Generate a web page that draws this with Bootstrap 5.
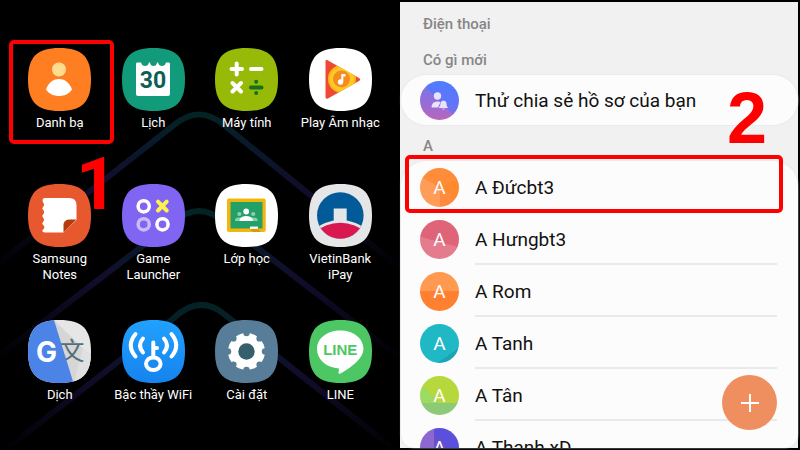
<!DOCTYPE html>
<html lang="vi">
<head>
<meta charset="utf-8">
<meta name="viewport" content="width=device-width, initial-scale=1">
<title>Danh bạ</title>
<link href="https://cdn.jsdelivr.net/npm/bootstrap@5.3.0/dist/css/bootstrap.min.css" rel="stylesheet">
<style>
body { font-family: Roboto, "Noto Sans", sans-serif; background: #000; }
.home { padding: 48px 13px 0; }
.wallpaper { z-index: 0; opacity: .8; }
.apps { z-index: 1; }
.app { min-height: 136px; font-size: 13px; line-height: 16px; color: #fff; gap: 4px; }
.app-icon { width: 63px; height: 63px; }
.mark-box { border: 4px solid #f00; border-radius: 5px; pointer-events: none; z-index: 3; }
.mark-box-app { top: -8px; left: -4px; right: -7px; height: 104px; }
.mark-box-row { top: -6px; left: 5px; right: 15px; height: 58px; }
.step { font: bold 72px/72px "Liberation Sans", Arial, sans-serif; color: #f00; z-index: 3; }
.step-one { top: 101px; left: 63px; font-family: Roboto, sans-serif; }
.step-two { top: 80px; right: 31px; }
.contacts { background: #f1f1f1; border: 2px solid #000; border-left: 0; padding-top: 11px; }
.heading { font-size: 15px; line-height: 22px; font-weight: 500; color: #868686; margin: 0 23px 4px; }
.heading-next { margin-top: 10px; }
.sheet { background: #fcfcfc; border-radius: 25px; margin-left: 1px; box-shadow: 0 0 2px #ddd; }
.sheet-list { border-radius: 25px 25px 14px 14px; min-height: 0; }
.person { color: #111; font-size: 19px; line-height: 24px; padding-left: 19px; gap: 16px; height: 52px; }
.person-single { height: 50px; }
.person-name { height: 100%; margin-right: 21px; padding-top: 4px; border-bottom: 2px solid #e8e9ea; }
.person-single .person-name { border: 0; padding-top: 2px; }
.avatar { width: 39px; height: 39px; color: #fff; padding-top: 2px; }
.av-profile { padding: 0; background: linear-gradient(45deg, #c967ae55 50%, #5277ff99 50%), linear-gradient(#4d83ff, #7a70f0 55%, #b066c0); }
.av-orange { background: conic-gradient(#ff8c38 0 65deg, #ff8a2e 65deg 120deg, #ff8c3c 120deg 180deg, #ff9c57 180deg 300deg, #ff8c38 300deg); }
.av-pink { background: linear-gradient(195deg, #e06478 55%, #e57c8d 55%); }
.av-sunset { background: linear-gradient(#ff9a50 50%, #ff8030 50%); }
.av-teal { background: linear-gradient(145deg, #20b8c4 77%, #1da3b8 77%); }
.av-lime { background: linear-gradient(#0000 68%, #8cca78 68%), linear-gradient(45deg, #9dda60 40%, #b6d83c 40%); }
.av-violet { background: linear-gradient(90deg, #8c68d0 37%, #0000 37%), linear-gradient(45deg, #6850c8 60%, #5b50dc 60%); }
.fab { width: 55px; height: 55px; right: 21px; bottom: 18px; background: #ef8f60; z-index: 2; }
</style>
<script src="https://cdn.jsdelivr.net/npm/bootstrap@5.3.0/dist/js/bootstrap.bundle.min.js"></script>
</head>
<body>
<svg class="d-none" aria-hidden="true">
  <symbol id="tile" viewBox="0 0 63 63"><path d="M31.500 0C54 0 63 9 63 31.500S54 63 31.500 63 0 54 0 31.500 9 0 31.500 0Z"/></symbol>
</svg>
<main class="row g-0 vh-100 overflow-hidden">
  <section class="col-6 home position-relative h-100 overflow-hidden">
    <svg class="wallpaper position-absolute top-0 start-0 w-100 h-100" viewBox="0 0 400 450" preserveAspectRatio="none" fill="none" stroke-width="6" aria-hidden="true">
      <defs>
        <linearGradient id="beam" x1="0" y1="0" x2="0" y2="1"><stop offset="0" stop-color="#062c2e"/><stop offset=".2" stop-color="#0c2036"/><stop offset=".5" stop-color="#170f36"/><stop offset="1" stop-color="#020103"/></linearGradient>
      </defs>
      <g stroke="url(#beam)">
        <path d="M0 262L174 125Q199 104 224 125L400 268"/>
        <path d="M0 355L174 222Q199 200 224 222L400 358"/>
        <path d="M5 450L174 318Q199 294 224 314L395 450"/>
      </g>
    </svg>
    <nav class="apps row row-cols-4 g-0 position-relative text-center">
      <a href="#" class="app col d-flex flex-column align-items-center text-decoration-none position-relative">
        <svg class="app-icon" viewBox="0 0 63 63"><use href="#tile" fill="#ff7e22"/><circle cx="31" cy="21.500" r="7" fill="#ffdd8e"/><path fill="#fff" d="M18 41.500C20.500 34 26 31 31 31S41.500 34 44 41.500C41 46 36 48 31 48S21 46 18 41.500Z"/></svg>
        <span>Danh bạ</span>
        <span class="mark-box mark-box-app position-absolute"></span>
        <span class="step step-one position-absolute">1</span>
      </a>
      <a href="#" class="app col d-flex flex-column align-items-center text-decoration-none">
        <svg class="app-icon" viewBox="0 0 63 63"><use href="#tile" fill="#129b7b"/><path fill="#fff" d="M15 14.500H19Q20 18 23 18T27 14.500H28Q28.500 18 31.500 18T35 14.500H36Q37 18 40 18T44 14.500H47Q48 14.500 48 16V46Q48 48 46 48H16Q14 48 14 46V16Q14 14.500 15 14.500Z"/><text x="31" y="40" text-anchor="middle" font-size="23" font-weight="700" fill="#0b5f55">30</text></svg>
        <span>Lịch</span>
      </a>
      <a href="#" class="app col d-flex flex-column align-items-center text-decoration-none">
        <svg class="app-icon" viewBox="0 0 63 63" fill="none" stroke-linecap="round"><use href="#tile" fill="#97ba08"/><path stroke="#fff" stroke-width="4" d="M16.500 21H27M21.700 15.500V26.500M36 21H46.500M17.500 35L26 43.500M26 35L17.500 43.500"/><path stroke="#14701c" stroke-width="4" d="M36 39.500H46.500M41.200 33.700V33.800M41.200 45V45.100"/></svg>
        <span>Máy tính</span>
      </a>
      <a href="#" class="app col d-flex flex-column align-items-center text-decoration-none">
        <svg class="app-icon" viewBox="0 0 63 63"><use href="#tile" fill="#fff"/><clipPath id="tri"><path d="M16.500 13Q17 11 19 12.500L50 30Q52.500 31.500 50 33L19 50.500Q16.500 51.500 16.500 49Z"/></clipPath><g clip-path="url(#tri)"><path fill="#ee4a33" d="M10 8H55V55H10Z"/><circle cx="33" cy="31" r="14" fill="#fcb814"/><circle cx="33" cy="31" r="12" fill="#fcca28"/></g><circle cx="32.500" cy="31" r="8.500" fill="#f68b1f"/><circle cx="31.500" cy="34" r="2.700" fill="#fff"/><path fill="#fff" d="M32.300 26H36.500V28.500H34.300V34H32.300Z"/></svg>
        <span class="text-nowrap">Play Âm nhạc</span>
      </a>
      <a href="#" class="app col d-flex flex-column align-items-center text-decoration-none">
        <svg class="app-icon" viewBox="0 0 63 63"><use href="#tile" fill="#e8582f"/><path fill="#fff" d="M17 14H41Q48.500 14 48.500 21V36L35.500 48.500H17Q14 48.500 14.500 46A3 3 0 0 0 15 40.700Q13.500 39.500 15 38A3 3 0 0 0 15 33.500Q13.500 32 15 30.500A3 3 0 0 0 15 25.800Q13.500 24.500 15 23A3 3 0 0 0 15 18.500Q13.500 14 17 14Z"/><path fill="#b23c0c" d="M48.500 35.500H41Q35.500 36 35.500 41V48.500Z"/></svg>
        <span>Samsung<br>Notes</span>
      </a>
      <a href="#" class="app col d-flex flex-column align-items-center text-decoration-none">
        <svg class="app-icon" viewBox="0 0 63 63" fill="none" stroke-width="3.500" stroke="#fff"><use href="#tile" fill="#8064f2" stroke="none"/><circle cx="21.700" cy="22.300" r="5.600"/><circle cx="21.700" cy="40.300" r="5.600" stroke="#c9bbfb"/><circle cx="40.500" cy="40.300" r="5.600"/><path stroke="#fff04d" stroke-width="4" stroke-linecap="round" d="M36 17.700L44.700 26.500M44.700 17.700L36 26.500"/></svg>
        <span>Game<br>Launcher</span>
      </a>
      <a href="#" class="app col d-flex flex-column align-items-center text-decoration-none">
        <svg class="app-icon" viewBox="0 0 63 63"><use href="#tile" fill="#fff"/><rect x="12" y="14.500" width="38.700" height="33.500" rx="2" fill="#f5b50f"/><path fill="#22a067" d="M15.500 18H47.500V44.500H15.500Z"/><g fill="#8bcfae"><circle cx="24.300" cy="30" r="2.100"/><circle cx="38.200" cy="30" r="2.100"/><path d="M20 37V35.500Q20.500 33.500 24 33.500H38.500Q42 33.500 42.500 35.500V37Z"/></g><circle cx="31.200" cy="27.500" r="2.900" fill="#fff"/><path fill="#fff" d="M24.700 37V35.500Q26 32 31.200 32T37.700 35.500V37Z"/><path fill="#f4f4f4" d="M35 42.500H43V45H35Z"/><path fill="#d39a0c" d="M35 45H43L46 48H38Z"/></svg>
        <span>Lớp học</span>
      </a>
      <a href="#" class="app col d-flex flex-column align-items-center text-decoration-none">
        <svg class="app-icon" viewBox="0 0 63 63"><use href="#tile" fill="#e5e6e7"/><clipPath id="disc"><circle cx="31.300" cy="31.500" r="23.300"/></clipPath><g clip-path="url(#disc)"><path fill="#035a98" d="M0 0H63V63H0Z"/><circle cx="31.300" cy="76" r="40" fill="#e5e6e7"/><circle cx="31.300" cy="76" r="37.300" fill="#d91850"/></g><path fill="#e5e6e7" d="M24.700 24.500H37.700V37.500H24.700Z"/></svg>
        <span>VietinBank<br>iPay</span>
      </a>
      <a href="#" class="app col d-flex flex-column align-items-center text-decoration-none">
        <svg class="app-icon" viewBox="0 0 63 63"><clipPath id="tile-clip"><path d="M31.500 0C54 0 63 9 63 31.500S54 63 31.500 63 0 54 0 31.500 9 0 31.500 0Z"/></clipPath><g clip-path="url(#tile-clip)"><path fill="#e6e6e6" d="M0 0H63V63H0Z"/><path fill="#d6d6d6" d="M26 0L63 36V63H45Z"/><path fill="#e0e0e0" d="M55 28L63 36V63H46Z"/><text x="44" y="40" text-anchor="middle" font-family="Noto Sans CJK SC, sans-serif" font-size="25" font-weight="400" fill="#546e7a">文</text><path fill="#4b83e6" d="M0 0H26L45.500 63H0Z"/></g><text x="18.500" y="41.500" text-anchor="middle" font-family="Inter, sans-serif" font-size="28" font-weight="700" fill="#fff">G</text></svg>
        <span>Dịch</span>
      </a>
      <a href="#" class="app col d-flex flex-column align-items-center text-decoration-none">
        <svg class="app-icon" viewBox="0 0 63 63" fill="none" stroke="#fff" stroke-width="4" stroke-linecap="round"><linearGradient id="sky" x1="0" y1="0" x2="0" y2="1"><stop stop-color="#21a1ff"/><stop offset="1" stop-color="#1683ee"/></linearGradient><use href="#tile" fill="url(#sky)" stroke="none"/><path d="M31.300 22.500V37M33 28H35M21 18.500Q15 25.500 21 32.500M42 18.500Q48 25.500 42 32.500M13.500 14Q4 25.500 13.500 36.500M49.500 14Q59 25.500 49.500 36.500"/><ellipse cx="31.300" cy="43.700" rx="7.300" ry="6.300"/></svg>
        <span class="text-nowrap">Bậc thầy WiFi</span>
      </a>
      <a href="#" class="app col d-flex flex-column align-items-center text-decoration-none">
        <svg class="app-icon" viewBox="0 0 63 63"><use href="#tile" fill="#577d99"/><circle cx="31.500" cy="31.500" r="18.500" fill="#fff"/><g fill="#577d99"><circle cx="31.500" cy="13" r="3.200"/><circle cx="31.500" cy="50" r="3.200"/><circle cx="13" cy="31.500" r="3.200"/><circle cx="50" cy="31.500" r="3.200"/><circle cx="18.400" cy="18.400" r="3.200"/><circle cx="44.600" cy="18.400" r="3.200"/><circle cx="18.400" cy="44.600" r="3.200"/><circle cx="44.600" cy="44.600" r="3.200"/></g><circle cx="31.500" cy="31.500" r="8.200" fill="#365f6e"/></svg>
        <span>Cài đặt</span>
      </a>
      <a href="#" class="app col d-flex flex-column align-items-center text-decoration-none">
        <svg class="app-icon" viewBox="0 0 63 63"><use href="#tile" fill="#4cc764"/><path fill="#fff" d="M31.300 10.500C44 10.500 54.500 18 54.500 29C54.500 38 43 47 31.500 53.500Q29.500 54.500 29.500 52.500L30 48.500C17 47.500 8 39.500 8 29C8 18 18.500 10.500 31.300 10.500Z"/><text x="31.300" y="34.500" text-anchor="middle" font-family="Liberation Sans, sans-serif" font-size="15" font-weight="700" fill="#4cc764">LINE</text></svg>
        <span>LINE</span>
      </a>
    </nav>
  </section>

  <section class="col-6 contacts position-relative h-100 d-flex flex-column">
    <h2 class="heading">Điện thoại</h2>
    <h2 class="heading heading-next">Có gì mới</h2>
    <a href="#" class="sheet person person-single d-flex align-items-center text-decoration-none flex-shrink-0">
      <span class="avatar av-profile rounded-circle flex-shrink-0"><svg class="d-block w-100 h-100" viewBox="0 0 39 39" fill="#e9e2fb"><circle cx="17.500" cy="15" r="3.700"/><path d="M11.500 26.500Q11.500 20.500 17.500 20.500Q20 20.500 20.500 21.500Q19 23 19 25L17.500 26.500Z"/><path d="M18.500 27Q20.500 25.500 20.500 22.500Q20.500 20 23.500 19.500Q26.500 20 26.500 22.500Q26.500 25.500 28 27ZM21.700 27.700H25Q23.500 29.500 21.700 27.700Z"/></svg></span>
      <span class="person-name flex-grow-1 d-flex align-items-center">Thử chia sẻ hồ sơ của bạn</span>
    </a>
    <span class="step step-two position-absolute">2</span>
    <h2 class="heading heading-next">A</h2>
    <div class="position-relative flex-grow-1 d-flex flex-column sheet-list">
      <div class="sheet sheet-list overflow-hidden flex-grow-1">
        <a href="#" class="person d-flex align-items-center text-decoration-none"><span class="avatar av-orange rounded-circle flex-shrink-0 d-flex align-items-center justify-content-center">A</span><span class="person-name flex-grow-1 d-flex align-items-center">A Đứcbt3</span></a>
        <a href="#" class="person d-flex align-items-center text-decoration-none"><span class="avatar av-pink rounded-circle flex-shrink-0 d-flex align-items-center justify-content-center">A</span><span class="person-name flex-grow-1 d-flex align-items-center">A Hưngbt3</span></a>
        <a href="#" class="person d-flex align-items-center text-decoration-none"><span class="avatar av-sunset rounded-circle flex-shrink-0 d-flex align-items-center justify-content-center">A</span><span class="person-name flex-grow-1 d-flex align-items-center">A Rom</span></a>
        <a href="#" class="person d-flex align-items-center text-decoration-none"><span class="avatar av-teal rounded-circle flex-shrink-0 d-flex align-items-center justify-content-center">A</span><span class="person-name flex-grow-1 d-flex align-items-center">A Tanh</span></a>
        <a href="#" class="person d-flex align-items-center text-decoration-none"><span class="avatar av-lime rounded-circle flex-shrink-0 d-flex align-items-center justify-content-center">A</span><span class="person-name flex-grow-1 d-flex align-items-center">A Tân</span></a>
        <a href="#" class="person d-flex align-items-center text-decoration-none"><span class="avatar av-violet rounded-circle flex-shrink-0 d-flex align-items-center justify-content-center">A</span><span class="person-name flex-grow-1 d-flex align-items-center">A Thanh xD</span></a>
      </div>
      <span class="mark-box mark-box-row position-absolute"></span>
    </div>
    <button type="button" class="fab btn rounded-circle border-0 p-0 position-absolute d-flex align-items-center justify-content-center" aria-label="Thêm liên hệ">
      <svg width="18" height="18" viewBox="0 0 18 18" stroke="#fff" stroke-width="2"><path d="M9 0V18M0 9H18"/></svg>
    </button>
  </section>
</main>
</body>
</html>
